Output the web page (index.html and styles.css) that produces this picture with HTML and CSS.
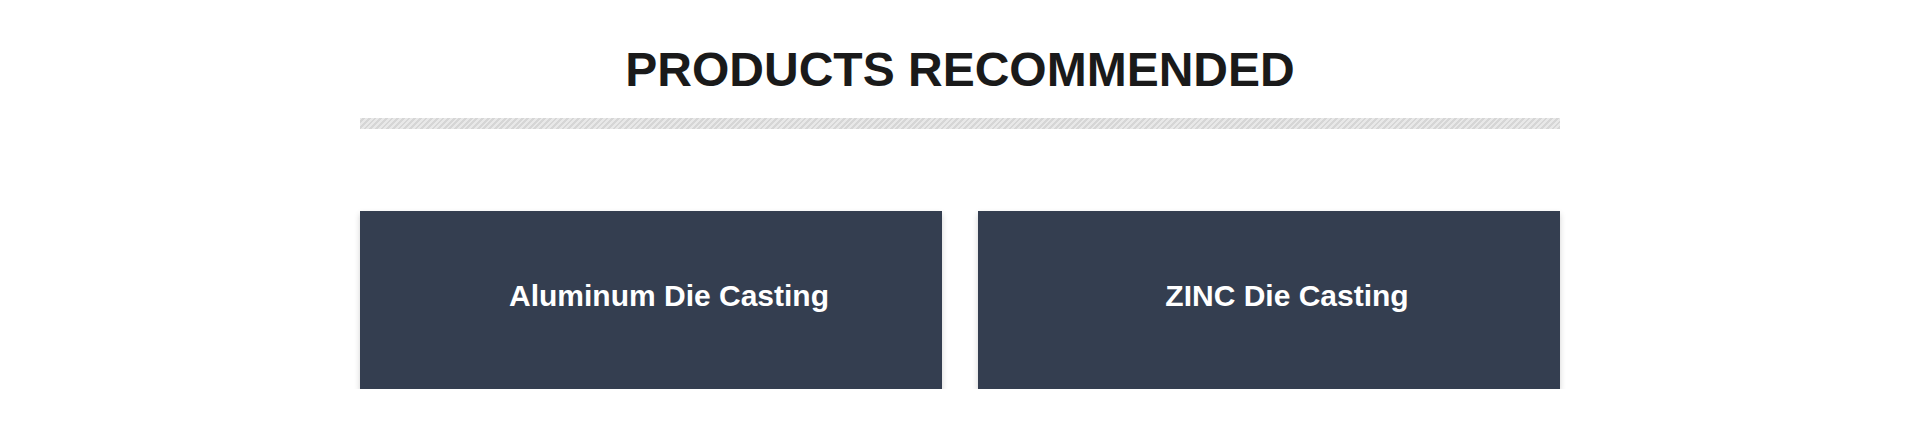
FILE: index.html
```html
<!DOCTYPE html>
<html lang="en">
<head>
  <meta charset="UTF-8" />
  <meta name="viewport" content="width=device-width, initial-scale=1.0" />
  <title>Products Recommended</title>
  <link rel="stylesheet" href="styles.css">
</head>
<body>
  <section class="recommended">
    <h2 class="section-title">PRODUCTS RECOMMENDED</h2>
    <div class="title-bar"></div>

    <div class="product-grid">
      <a class="product-card" href="#">Aluminum Die Casting</a>
      <a class="product-card" href="#">ZINC Die Casting</a>
    </div>
  </section>
</body>
</html>
```

FILE: styles.css
```css
body {
  margin: 0;
  font-family: 'Liberation Sans', Arial, sans-serif;
  background: #fff;
}
.recommended {
  width: 1200px;
  margin: 0 auto;
  padding-top: 41px;
}
.section-title {
  margin: 0;
  font-size: 48px;
  line-height: 58px;
  font-weight: 700;
  text-align: center;
  color: #1a1a1a;
}
.title-bar {
  margin-top: 19px;
  height: 11px;
  background: repeating-linear-gradient(135deg, #e8e8e8 0, #e8e8e8 2px, #d6d6d6 2px, #d6d6d6 4px);
}
.product-grid {
  margin-top: 82px;
  display: grid;
  grid-template-columns: 1fr 1fr;
  gap: 36px;
}
.product-card {
  height: 178px;
  box-sizing: border-box;
  padding: 0 0 8px 36px;
  display: flex;
  align-items: center;
  justify-content: center;
  background: #343e50;
  color: #fff;
  font-size: 30px;
  font-weight: 700;
  text-decoration: none;
  box-shadow: 0 3px 6px rgba(0,0,0,0.18);
}
```
